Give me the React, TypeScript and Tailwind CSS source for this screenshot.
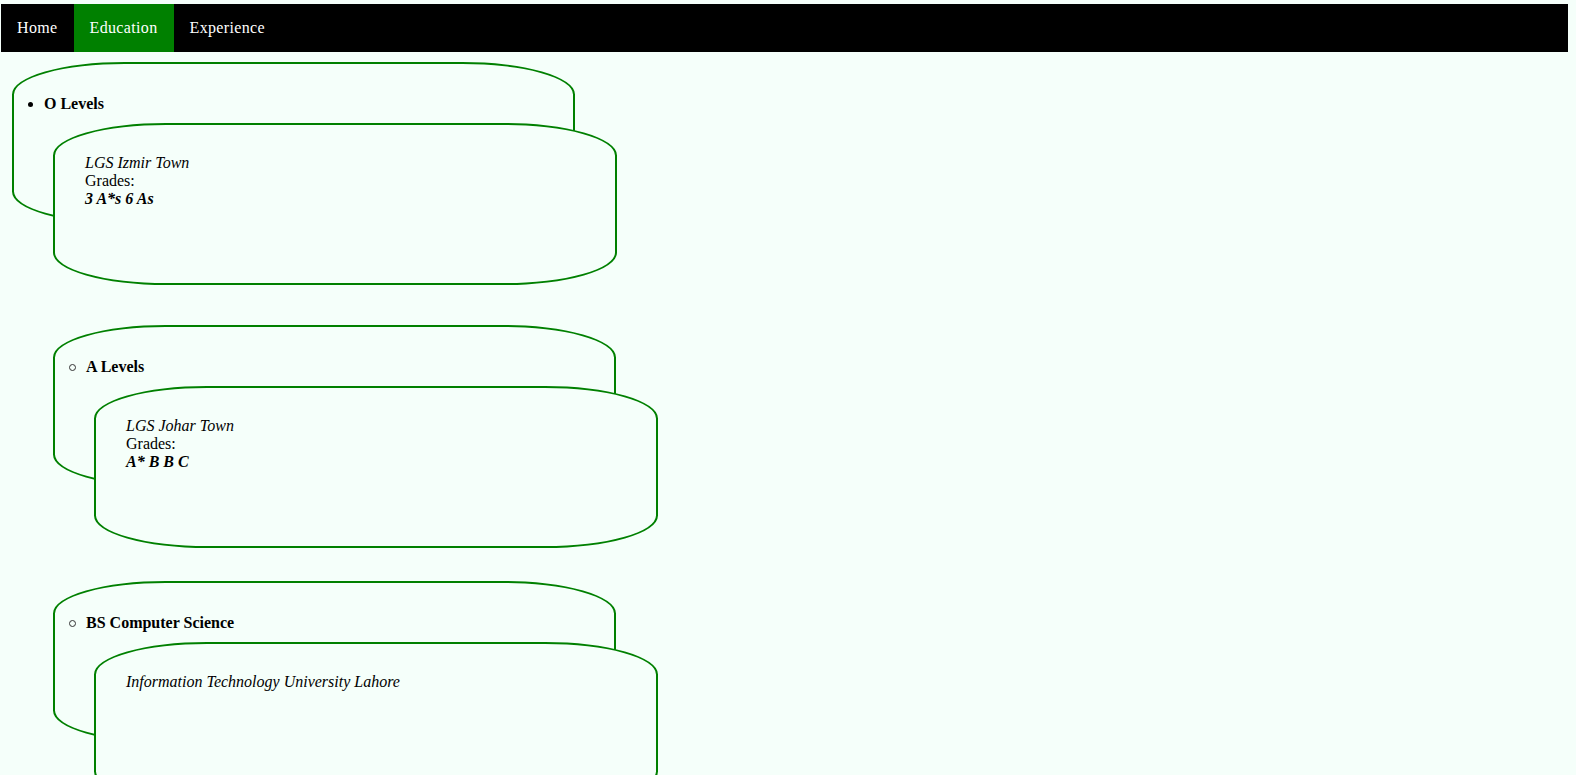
import { ReactNode } from 'react';

type BulletKind = 'disc' | 'circle';

type CardProps = {
  title: string;
  bullet: BulletKind;
  indent: string;
  spacing: string;
  children: ReactNode;
};

const navItems = ['Home', 'Education', 'Experience'];

const Bullet = ({ kind }: { kind: BulletKind }) =>
  kind === 'disc' ? (
    <span className="mr-[11px] ml-[14px] inline-block h-[5px] w-[5px] rounded-full bg-black" />
  ) : (
    <span className="mr-[10px] ml-[14px] inline-block h-[7px] w-[7px] rounded-full border border-[#333]" />
  );

const EducationCard = ({ title, bullet, indent, spacing, children }: CardProps) => (
  <div className={`flex flex-col ${indent} ${spacing}`}>
    {/* Outer card with the heading */}
    <div className="flex h-[162px] w-[563px] items-start rounded-[20%] border-2 border-[#008000] pt-[31px]">
      <div className="flex items-center">
        <Bullet kind={bullet} />
        <strong className="text-base leading-[18px]">{title}</strong>
      </div>
    </div>

    {/* Inner card, overlapping */}
    <div className="relative -mt-[101px] ml-[41px] h-[162px] w-[564px] rounded-[20%] border-2 border-[#008000] bg-[#f5fffa] pt-[29px] pl-[30px] text-base leading-[18px]">
      {children}
    </div>
  </div>
);

export default function App() {
  return (
    <div className="min-h-screen overflow-hidden bg-[#f5fffa] pt-1 font-['Liberation_Serif','Times_New_Roman',serif] text-black">
      <nav className="mr-2 ml-px flex bg-black">
        {navItems.map((item) => (
          <a
            key={item}
            className={`block px-4 py-[15px] text-base leading-[18px] tracking-[0.35px] text-white ${
              item === 'Education' ? 'bg-[#008000]' : ''
            }`}
          >
            {item}
          </a>
        ))}
      </nav>

      <div className="flex flex-col">
        <EducationCard title="O Levels" bullet="disc" indent="ml-[12px]" spacing="mt-[10px]">
          <em>LGS Izmir Town</em>
          <br />
          Grades:
          <br />
          <strong>
            <em>3 A*s 6 As</em>
          </strong>
        </EducationCard>

        <EducationCard title="A Levels" bullet="circle" indent="ml-[53px]" spacing="mt-[40px]">
          <em>LGS Johar Town</em>
          <br />
          Grades:
          <br />
          <strong>
            <em>A* B B C</em>
          </strong>
        </EducationCard>

        <EducationCard title="BS Computer Science" bullet="circle" indent="ml-[53px]" spacing="mt-[33px]">
          <em>Information Technology University Lahore</em>
        </EducationCard>
      </div>
    </div>
  );
}
